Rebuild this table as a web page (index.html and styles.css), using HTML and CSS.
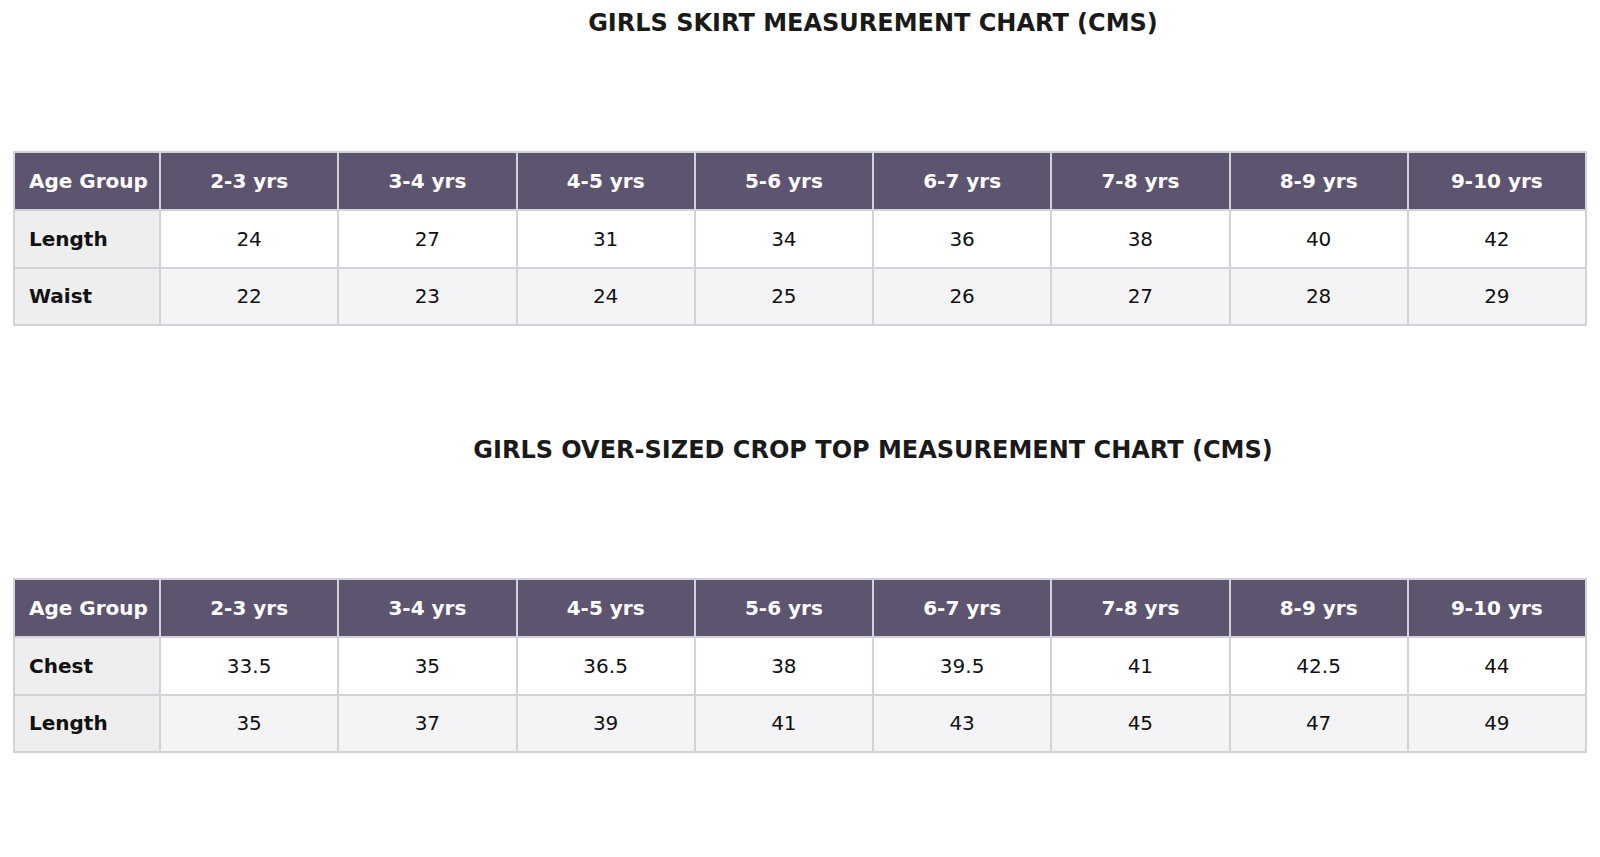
FILE: index.html
```html
<!DOCTYPE html>
<html lang="en">
<head>
<meta charset="utf-8">
<title>Girls Measurement Charts</title>
<link rel="stylesheet" href="styles.css">
</head>
<body>
<div class="page">
  <section class="chart">
    <h2 class="chart-title">GIRLS SKIRT MEASUREMENT CHART (CMS)</h2>
    <table class="size-table">
      <colgroup><col class="c-label"><col><col><col><col><col><col><col><col></colgroup>
      <thead>
        <tr><th class="label">Age Group</th><th>2-3 yrs</th><th>3-4 yrs</th><th>4-5 yrs</th><th>5-6 yrs</th><th>6-7 yrs</th><th>7-8 yrs</th><th>8-9 yrs</th><th>9-10 yrs</th></tr>
      </thead>
      <tbody>
        <tr><td class="label">Length</td><td>24</td><td>27</td><td>31</td><td>34</td><td>36</td><td>38</td><td>40</td><td>42</td></tr>
        <tr class="alt"><td class="label">Waist</td><td>22</td><td>23</td><td>24</td><td>25</td><td>26</td><td>27</td><td>28</td><td>29</td></tr>
      </tbody>
    </table>
  </section>
  <section class="chart">
    <h2 class="chart-title">GIRLS OVER-SIZED CROP TOP MEASUREMENT CHART (CMS)</h2>
    <table class="size-table">
      <colgroup><col class="c-label"><col><col><col><col><col><col><col><col></colgroup>
      <thead>
        <tr><th class="label">Age Group</th><th>2-3 yrs</th><th>3-4 yrs</th><th>4-5 yrs</th><th>5-6 yrs</th><th>6-7 yrs</th><th>7-8 yrs</th><th>8-9 yrs</th><th>9-10 yrs</th></tr>
      </thead>
      <tbody>
        <tr><td class="label">Chest</td><td>33.5</td><td>35</td><td>36.5</td><td>38</td><td>39.5</td><td>41</td><td>42.5</td><td>44</td></tr>
        <tr class="alt"><td class="label">Length</td><td>35</td><td>37</td><td>39</td><td>41</td><td>43</td><td>45</td><td>47</td><td>49</td></tr>
      </tbody>
    </table>
  </section>
</div>
</body>
</html>
```

FILE: styles.css
```css
html, body {
  margin: 0;
  padding: 0;
  background: #ffffff;
}
body {
  padding: 10px 8px 0 8px;
  font-family: "DejaVu Sans", Verdana, sans-serif;
  color: #111111;
}
.page {
  display: flex;
  flex-direction: column;
  gap: 111px;
}
.chart-title {
  margin: 0 0 115px 0;
  padding-left: 146px;
  text-align: center;
  font-size: 24px;
  font-weight: bold;
  line-height: 26px;
  color: #1a1a1a;
}
.size-table {
  width: calc(100% - 10px);
  margin: 0 5px;
  border-collapse: collapse;
  table-layout: fixed;
  font-size: 20px;
}
.size-table col.c-label {
  width: 146px;
}
.size-table th,
.size-table td {
  border: 2px solid #d2d2d8;
  text-align: center;
  padding: 0 14px;
  white-space: nowrap;
}
.size-table th {
  height: 56px;
  background: #5d5470;
  color: #ffffff;
  font-weight: bold;
}
.size-table td {
  height: 55.5px;
  background: #ffffff;
}
.size-table tr.alt td {
  background: #f4f4f6;
}
.size-table .label {
  text-align: left;
}
.size-table td.label,
.size-table tr.alt td.label {
  background: #eeeeee;
  font-weight: bold;
}
```
